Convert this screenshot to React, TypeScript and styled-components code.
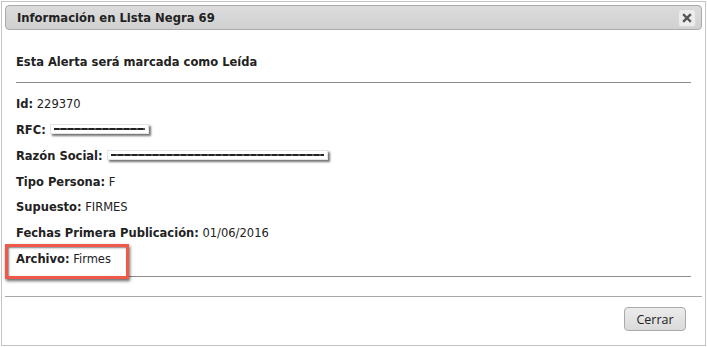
import React from "react";
import styled, { createGlobalStyle } from "styled-components";

const Global = createGlobalStyle`
  html, body { margin: 0; padding: 0; background: #fff; }
  body { font-family: "DejaVu Sans", Verdana, sans-serif; color: #222; }
`;

const Dialog = styled.div`
  box-sizing: border-box;
  margin: 1px 0 0 1px;
  width: 705px;
  height: 345px;
  border: 1px solid #c4c4c4;
  padding: 3px;
  background: #fff;
  display: flex;
  flex-direction: column;
`;

const Header = styled.div`
  box-sizing: border-box;
  height: 27px;
  border: 1px solid #aaa;
  border-radius: 4px;
  background: linear-gradient(#dcdcdc, #d0d0d0);
  display: flex;
  align-items: center;
  justify-content: space-between;
  padding: 0 5px 0 11px;
`;

const Title = styled.span`
  font-size: 11.6px;
  font-weight: bold;
  color: #222;
`;

const CloseBtn = styled.button`
  box-sizing: border-box;
  width: 18px;
  height: 18px;
  padding: 0;
  border: 1px solid #d8d8d8;
  border-radius: 3px;
  background: #ececec;
  display: flex;
  align-items: center;
  justify-content: center;
`;

const Content = styled.div`
  flex: 1;
  padding: 19px 11px 0 11px;
  font-size: 11.5px;
`;

const Lead = styled.div`
  height: 26px;
  line-height: 26px;
  font-weight: bold;
`;

const Rule = styled.div<{ $top: number; $bottom: number }>`
  height: 1px;
  background: #8c8c8c;
  margin: ${(p) => p.$top}px 0 ${(p) => p.$bottom}px;
`;

const Row = styled.div`
  position: relative;
  height: 25.7px;
  line-height: 25.7px;
  white-space: nowrap;
`;

const Label = styled.b`
  font-weight: bold;
`;

const Redacted = styled.span<{ $w: number }>`
  display: inline-block;
  vertical-align: middle;
  box-sizing: border-box;
  width: ${(p) => p.$w}px;
  height: 10px;
  margin-left: 4px;
  margin-top: -3px;
  background: #fff;
  border: 1px solid #e4e4e4;
  box-shadow: 2px 2px 2px rgba(0, 0, 0, 0.55);
  position: relative;
  &::after {
    content: "";
    position: absolute;
    left: 3px;
    right: 3px;
    top: 3px;
    height: 2px;
    background: repeating-linear-gradient(90deg, #222 0 5px, #555 5px 7px);
  }
`;

const Highlight = styled.div`
  position: absolute;
  left: -11px;
  top: -3px;
  width: 124px;
  height: 35px;
  box-sizing: border-box;
  border: 3px solid #f0584a;
  box-shadow: 1px 2px 3px rgba(0, 0, 0, 0.6), inset 1px 1px 2px rgba(0, 0, 0, 0.5);
  pointer-events: none;
`;

const Footer = styled.div`
  margin-top: 19px;
  border-top: 1px solid #a8a8a8;
  height: 37px;
  display: flex;
  justify-content: flex-end;
  align-items: flex-start;
  padding: 10px 16px 0 0;
`;

const Button = styled.button`
  box-sizing: border-box;
  width: 62px;
  height: 24px;
  border: 1px solid #aaa;
  border-radius: 4px;
  background: linear-gradient(#ececec, #dadada);
  font-family: "Open Sans", "Noto Sans", sans-serif;
  font-size: 12.5px;
  color: #222;
  padding: 0;
`;

const rows: { label: string; value?: string; redact?: number }[] = [
  { label: "Id:", value: "229370" },
  { label: "RFC:", redact: 99 },
  { label: "Razón Social:", redact: 221 },
  { label: "Tipo Persona:", value: "F" },
  { label: "Supuesto:", value: "FIRMES" },
  { label: "Fechas Primera Publicación:", value: "01/06/2016" },
];

export default function App() {
  return (
    <>
      <Global />
      <Dialog>
        <Header>
          <Title>Información en Lista Negra 69</Title>
          <CloseBtn aria-label="close">
            <svg width="10" height="10" viewBox="0 0 10 10">
              <path d="M2 2 L8 8 M8 2 L2 8" stroke="#555" strokeWidth="2.4" strokeLinecap="square" />
            </svg>
          </CloseBtn>
        </Header>
        <Content>
          <Lead>Esta Alerta será marcada como Leída</Lead>
          <Rule $top={7} $bottom={9} />
          {rows.map((r) => (
            <Row key={r.label}>
              <Label>{r.label}</Label>
              {r.value ? ` ${r.value}` : null}
              {r.redact ? <Redacted $w={r.redact} /> : null}
            </Row>
          ))}
          <Row>
            <Label>Archivo:</Label> Firmes
            <Highlight />
          </Row>
          <Rule $top={4} $bottom={0} />
        </Content>
        <Footer>
          <Button>Cerrar</Button>
        </Footer>
      </Dialog>
    </>
  );
}
